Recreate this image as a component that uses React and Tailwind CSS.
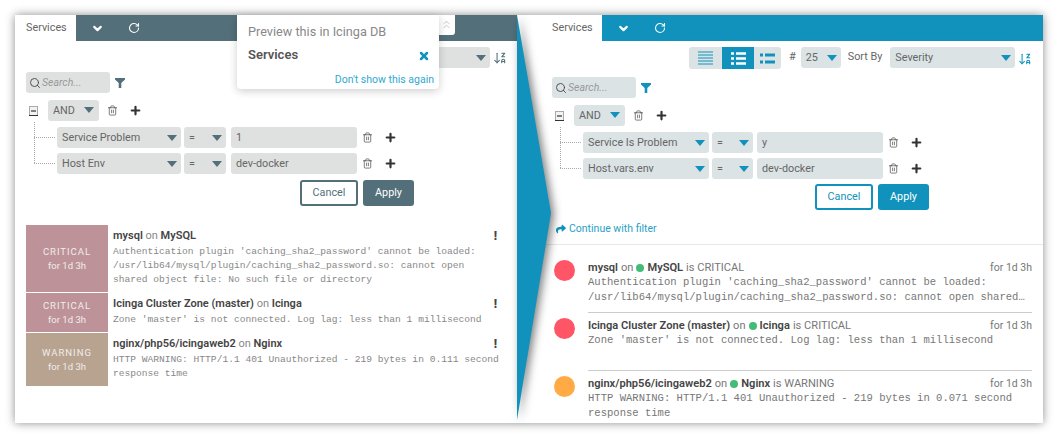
import React from "react";
import { ChevronDown, RotateCw, Search, Trash2, Plus, X, ChevronsUp, ArrowDownZA } from "lucide-react";
import { FaShare } from "react-icons/fa";

function Caret({ className }) {
  return (
    <svg width="10" height="6" viewBox="0 0 10 6" className={className}>
      <path d="M0 0H10L5 6Z" fill="currentColor" />
    </svg>
  );
}

function Funnel({ className }) {
  return (
    <svg width="10" height="10" viewBox="0 0 10 10" className={className}>
      <path d="M0 0H10V1.5L6.3 5V10H3.7V5L0 1.5Z" fill="currentColor" />
    </svg>
  );
}

function MinusBox() {
  return (
    <svg width="9" height="10" viewBox="0 0 9 10" className="text-[#444]">
      <rect x="0.5" y="0.5" width="8" height="9" fill="#f3f3f3" stroke="#aaa" />
      <path d="M2 5H7" stroke="#333" strokeWidth="1.2" />
      <path d="M0 9.5H9" stroke="#333" />
    </svg>
  );
}

function Box({ className, caret, text, caretClass }) {
  return (
    <div className={`flex h-[21px] items-center justify-between rounded-[3px] pl-[5px] pr-[4px] text-[10.8px] text-[#666] ${className}`}>
      <span className="pt-[1px]">{text}</span>
      {caret && <Caret className={caretClass} />}
    </div>
  );
}

function Tools({ plusGap }) {
  return (
    <div className={`flex items-center ${plusGap}`}>
      <Trash2 size={11} strokeWidth={1.5} className="text-[#444]" />
      <Plus size={13} strokeWidth={4} className="text-[#333]" />
    </div>
  );
}

function FilterEditor({ v }) {
  return (
    <div className="relative">
      <div className={`flex items-center ${v.topGap}`}>
        <div className="flex w-[9px] justify-center"><MinusBox /></div>
        <Box text="AND" caret className={`w-[51px] ${v.bg}`} caretClass={`${v.caret} mr-[1px] -mt-[1px]`} />
        <Tools plusGap="gap-[11px] -ml-[2px]" />
      </div>
      <div className="absolute left-[8px] top-[22px] h-[41px] w-[1px] border-l border-dotted border-[#aaa]"></div>
      <div className="absolute left-[8px] top-[37px] h-[1px] w-[21px] border-t border-dotted border-[#aaa]"></div>
      <div className="absolute left-[8px] top-[63px] h-[1px] w-[21px] border-t border-dotted border-[#aaa]"></div>
      <div className="h-[1px]"></div>
      {v.rows.map(([a, b]) => (
        <div key={a} className={`mt-[5px] flex items-center ${v.rowPad}`}>
          <Box text={a} caret className={`${v.w1} ${v.bg}`} caretClass={v.caret} />
          <Box text="=" caret className={`ml-[3px] ${v.w2} ${v.bg}`} caretClass={v.caret} />
          <Box text={b} className={`${v.w3} ${v.ml3} ${v.bg}`} />
          <Tools plusGap="gap-[11px] ml-[5px]" />
        </div>
      ))}
      <div className={`flex ${v.btnPad}`}>
        <button className={`h-[26px] w-[58px] rounded-[3px] border-2 bg-white text-[10.8px] ${v.cancel}`}>Cancel</button>
        <button className={`ml-[5px] h-[26px] w-[51px] rounded-[3px] text-[10.8px] text-white ${v.apply}`}>Apply</button>
      </div>
    </div>
  );
}

function SearchRow({ bg, funnel }) {
  return (
    <div className="flex items-center">
      <div className={`flex h-[21px] w-[84px] items-center rounded-[3px] pl-[3px] ${bg}`}>
        <Search size={12} strokeWidth={1.8} className="text-[#444]" />
        <span className="ml-[1px] text-[10.5px] italic text-[#999]">Search...</span>
      </div>
      <Funnel className={`ml-[5px] ${funnel}`} />
    </div>
  );
}

function Header({ bar, pad, w }) {
  return (
    <div className={`flex h-[26px] items-stretch ${bar}`}>
      <div className={`flex items-center bg-white text-[10.8px] text-[#666] ${pad} ${w}`}>Services</div>
      <div className="flex items-center gap-[24px] pl-[15px] text-white">
        <ChevronDown size={13} strokeWidth={4} />
        <RotateCw size={12} strokeWidth={2.2} />
      </div>
    </div>
  );
}

function OldRow({ state, bg, title, on, host, lines, h }) {
  return (
    <div className={`mb-[1px] flex ${h}`}>
      <div className={`flex w-[82px] shrink-0 flex-col items-center justify-center leading-[14px] text-[#f2ecec] ${bg}`}>
        <span className="text-[9.5px] tracking-[1px]">{state}</span>
        <span className="text-[9.5px]">for 1d 3h</span>
      </div>
      <div className="ml-[5px] w-[386px] pt-[4px]">
        <div className="flex items-center justify-between">
          <div className="text-[11px] leading-[14px] text-[#888]">
            <b className="font-semibold text-[#444]">{title}</b> {on} <b className="font-semibold text-[#444]">{host}</b>
          </div>
          <span className="mr-[2px] text-[12px] font-black leading-[14px] text-[#444]">!</span>
        </div>
        <div className="mt-[2px] font-['Liberation_Mono',monospace] text-[9.6px] leading-[14px] whitespace-pre text-[#888]">{lines}</div>
      </div>
    </div>
  );
}

function NewRow({ color, title, host, state, lines, h, line }) {
  return (
    <div className={`flex ${h}`}>
      <div className={`h-[21px] w-[21px] shrink-0 rounded-full ${color}`}></div>
      <div className={`ml-[13px] flex-1 pt-[1px] ${line}`}>
        <div className="flex items-center justify-between text-[11.1px] leading-[14px] text-[#777]">
          <div className="flex items-center">
            <b className="font-semibold text-[#444]">{title}</b>
            <span className="ml-[3px]">on</span>
            <span className="mx-[3px] h-[8px] w-[8px] rounded-full bg-[#44bb77]"></span>
            <b className="font-semibold text-[#444]">{host}</b>
            <span className="ml-[3px]">is {state}</span>
          </div>
          <span className="text-[10.5px]">for 1d 3h</span>
        </div>
        <div className="font-['Liberation_Mono',monospace] text-[10.55px] leading-[15px] whitespace-pre text-[#777]">{lines}</div>
      </div>
    </div>
  );
}

export default function App() {
  const left = {
    topGap: "gap-[10px] pl-[3px]",
    bg: "bg-[#dfe0e0]",
    caret: "text-[#536f7a]",
    rowPad: "pl-[31px]",
    w1: "w-[124px]",
    w2: "w-[42px]",
    w3: "w-[126px]",
    ml3: "ml-[5px]",
    rows: [["Service Problem", "1"], ["Host Env", "dev-docker"]],
    btnPad: "pl-[274px] mt-[6px]",
    cancel: "border-[#536f7a] text-[#536f7a]",
    apply: "bg-[#536f7a]",
  };
  const right = {
    topGap: "gap-[10px] pl-[3px]",
    bg: "bg-[#dbe3e5]",
    caret: "text-[#1092bd]",
    rowPad: "pl-[31px]",
    w1: "w-[126px]",
    w2: "w-[41px]",
    w3: "w-[126px]",
    ml3: "ml-[4px]",
    rows: [["Service Is Problem", "y"], ["Host.vars.env", "dev-docker"]],
    btnPad: "pl-[263px] mt-[5px]",
    cancel: "border-[#1092bd] text-[#1092bd]",
    apply: "bg-[#1092bd]",
  };
  return (
    <div className="h-[438px] w-[1058px] overflow-hidden bg-white pl-[15px] pt-[15px] font-['Roboto',sans-serif]">
      <div className="relative flex h-[408px] w-[1028px] shadow-[0_0_9px_rgba(0,0,0,0.45)]">
        {/* Before */}
        <div className="relative w-[502px] shrink-0 bg-white">
          <Header bar="bg-[#536f7a]" pad="pl-[11px]" w="w-[61px]" />
          <div className="mt-[6px] flex h-[21px] items-center justify-end pr-[10px]">
            <Box className="w-[70px] bg-[#dfe0e0]" caret caretClass="text-[#536f7a]" />
            <ArrowDownZA size={14} strokeWidth={1.8} className="ml-[3px] text-[#536f7a]" />
          </div>
          <div className="pl-[11px] pt-[4px]">
            <SearchRow bg="bg-[#dfe0e0]" funnel="text-[#536f7a]" />
            <div className="mt-[7px]"><FilterEditor v={left} /></div>
          </div>
          <div className="mt-[19px] pl-[11px]">
            <OldRow h="h-[67px]" state="CRITICAL" bg="bg-[#bd9399]" title="mysql" on="on" host="MySQL" lines={"Authentication plugin 'caching_sha2_password' cannot be loaded:\n/usr/lib64/mysql/plugin/caching_sha2_password.so: cannot open\nshared object file: No such file or directory"} />
            <OldRow h="h-[39px]" state="CRITICAL" bg="bg-[#bd9399]" title="Icinga Cluster Zone (master)" on="on" host="Icinga" lines={"Zone 'master' is not connected. Log lag: less than 1 millisecond"} />
            <OldRow h="h-[53px]" state="WARNING" bg="bg-[#b7a38f]" title="nginx/php56/icingaweb2" on="on" host="Nginx" lines={"HTTP WARNING: HTTP/1.1 401 Unauthorized - 219 bytes in 0.111 second\nresponse time"} />
          </div>
          {/* Preview popup */}
          <div className="absolute left-[222px] top-0 flex h-[20px] w-[218px] justify-end rounded-br-[3px] bg-white pr-[2px] pt-[3px] text-[#ddd]">
            <ChevronsUp size={13} strokeWidth={2} />
          </div>
          <div className="absolute left-[222px] top-0 h-[74px] w-[202px] rounded-b-[4px] bg-white pl-[11px] pr-[5px] pt-[9px] shadow-[0_2px_8px_rgba(0,0,0,0.2)]">
            <div className="text-[12.7px] leading-[15px] text-[#888]">Preview this in Icinga DB</div>
            <div className="mt-[8px] flex items-center justify-between pr-[4px]">
              <b className="text-[13px] font-semibold leading-[15px] text-[#555]">Services</b>
              <X size={12} strokeWidth={5} className="mt-[2px] text-[#1092bd]" />
            </div>
            <div className="mt-[11px] text-right text-[10.5px] leading-[14px] text-[#2eaad0]">Don't show this again</div>
          </div>
        </div>
        {/* After */}
        <div className="flex-1 bg-white">
          <Header bar="bg-[#1092bd]" pad="pl-[35px]" w="w-[85px]" />
          <div className="mt-[6px] flex h-[22px] items-start pl-[172px]">
            <div className="flex h-[22px] w-[92px] overflow-hidden rounded-[3px] bg-[#dbe3e5] text-[#1092bd]">
              <div className="flex w-[33px] items-center justify-center">
                <svg width="15" height="14" viewBox="0 0 15 14"><path d="M0 1H15M0 4H15M0 7H15M0 10H15M0 13H15" stroke="currentColor" strokeWidth="1" /></svg>
              </div>
              <div className="flex w-[32px] items-center justify-center bg-[#1092bd] text-white">
                <svg width="15" height="13" viewBox="0 0 15 13"><path d="M0 1.5H3M5 1.5H15M0 6.5H3M5 6.5H15M0 11.5H3M5 11.5H15" stroke="currentColor" strokeWidth="2.4" /></svg>
              </div>
              <div className="flex flex-1 items-center justify-center">
                <svg width="15" height="13" viewBox="0 0 15 13"><path d="M0 3H3M5 3H15M0 10H3M5 10H15" stroke="currentColor" strokeWidth="3" /></svg>
              </div>
            </div>
            <span className="ml-[8px] text-[11px] leading-[20px] text-[#666]">#</span>
            <Box text="25" caret className="ml-[5px] w-[40px] bg-[#dbe3e5]" caretClass="text-[#1092bd]" />
            <span className="ml-[7px] text-[10.8px] leading-[19px] text-[#666]">Sort By</span>
            <Box text="Severity" caret className="ml-[8px] w-[125px] bg-[#dbe3e5]" caretClass="text-[#1092bd]" />
            <ArrowDownZA size={14} strokeWidth={1.8} className="ml-[3px] mt-[5px] text-[#1092bd]" />
          </div>
          <div className="pl-[35px] pt-[8px]">
            <SearchRow bg="bg-[#dbe3e5]" funnel="text-[#1092bd]" />
            <div className="mt-[7px]"><FilterEditor v={right} /></div>
            <div className="mt-[12px] flex items-center pl-[4px] text-[10.5px] leading-[14px] text-[#2a9fc6]">
              <FaShare size={10} className="text-[#1092bd]" />
              <span className="ml-[3px]">Continue with filter</span>
            </div>
          </div>
          <div className="mt-[8px] border-t border-[#e8e8e8] pl-[37px] pr-[11px] pt-[15px]">
            <NewRow h="h-[53px]" color="bg-[#ff5566]" title="mysql" host="MySQL" state="CRITICAL" line="h-[53px] border-b border-[#ccc]" lines={"Authentication plugin 'caching_sha2_password' cannot be loaded:\n/usr/lib64/mysql/plugin/caching_sha2_password.so: cannot open shared…"} />
            <div className="h-[5px]"></div>
            <NewRow h="h-[53px]" color="bg-[#ff5566]" title="Icinga Cluster Zone (master)" host="Icinga" state="CRITICAL" line="h-[53px] border-b border-[#ccc]" lines={"Zone 'master' is not connected. Log lag: less than 1 millisecond"} />
            <div className="h-[5px]"></div>
            <NewRow h="h-[48px]" color="bg-[#ffaa44]" title="nginx/php56/icingaweb2" host="Nginx" state="WARNING" line="" lines={"HTTP WARNING: HTTP/1.1 401 Unauthorized - 219 bytes in 0.071 second\nresponse time"} />
          </div>
        </div>
        {/* Arrow between the two views */}
        <svg width="40" height="408" viewBox="0 0 40 408" className="absolute left-[502px] top-0 drop-shadow-[3px_1px_4px_rgba(0,0,0,0.5)]">
          <path d="M0 0L34 198L0 405Z" fill="#1092bd" />
        </svg>
      </div>
    </div>
  );
}
